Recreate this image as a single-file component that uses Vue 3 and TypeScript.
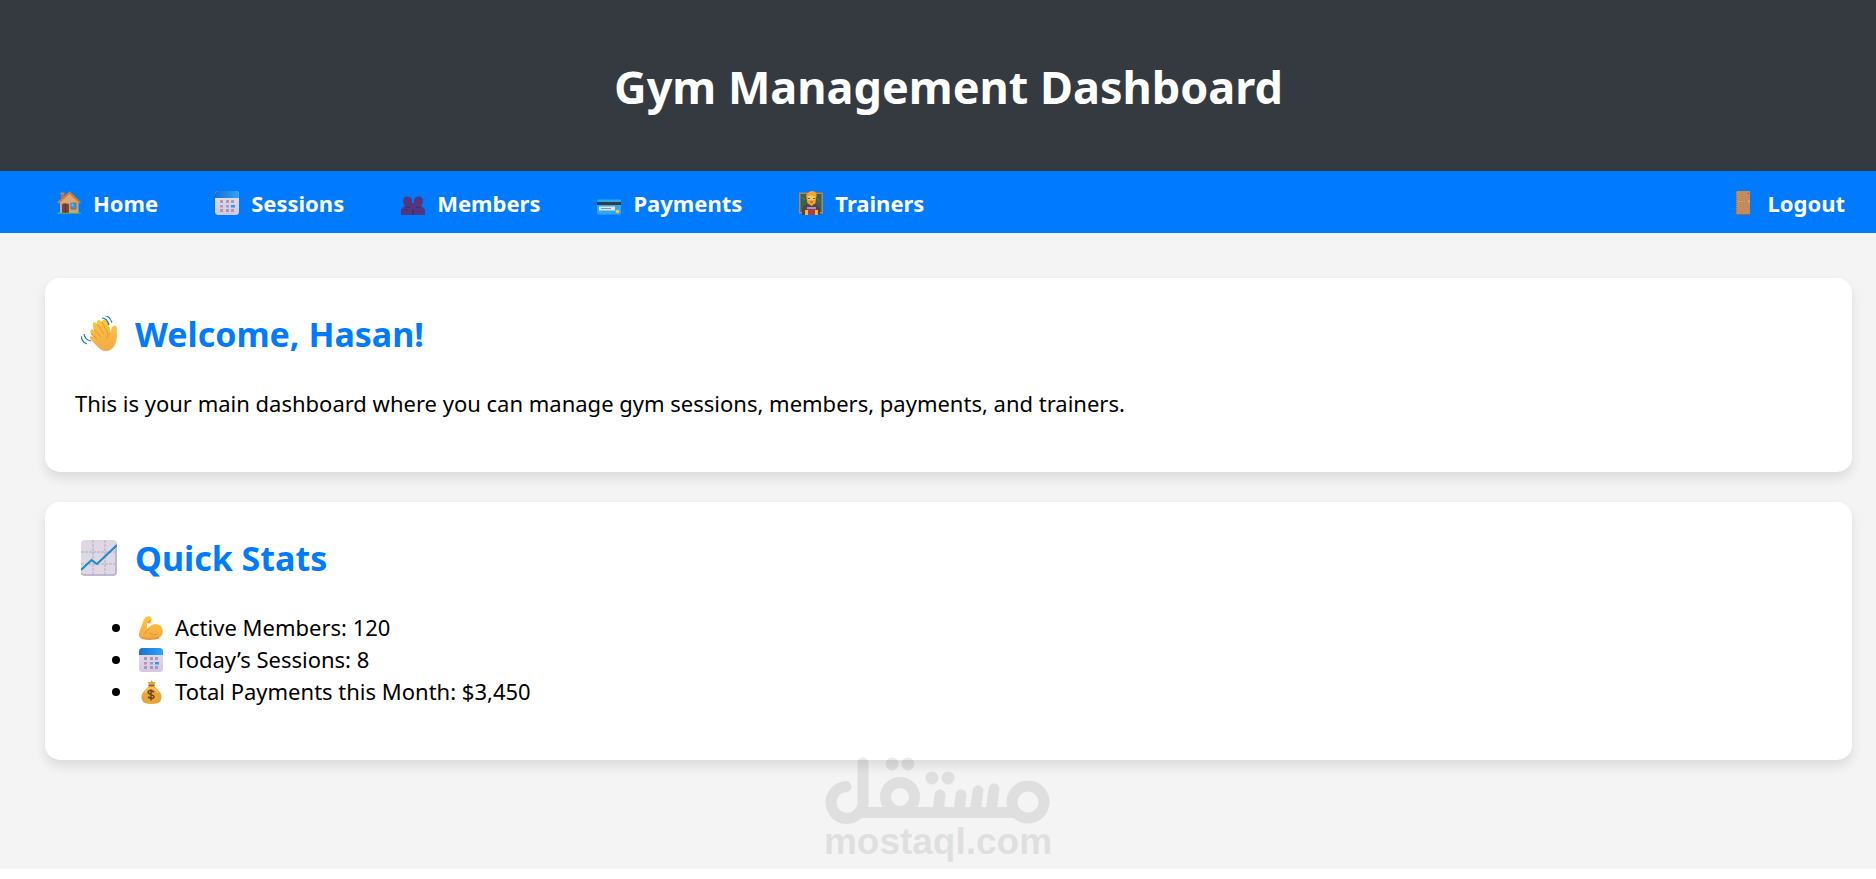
<script setup lang="ts">
interface NavItem {
  label: string
  icon: string
}

interface Stat {
  icon: string
  text: string
}

const navItems: NavItem[] = [
  { label: 'Home', icon: 'home' },
  { label: 'Sessions', icon: 'calendar' },
  { label: 'Members', icon: 'members' },
  { label: 'Payments', icon: 'card' },
  { label: 'Trainers', icon: 'trainer' },
]

const stats: Stat[] = [
  { icon: 'muscle', text: 'Active Members: 120' },
  { icon: 'calendar', text: 'Today’s Sessions: 8' },
  { icon: 'money', text: 'Total Payments this Month: $3,450' },
]
</script>

<template>
  <svg class="sprite" aria-hidden="true">
    <defs>
      <linearGradient id="skin" x1="0" y1="0" x2="0" y2="1">
        <stop offset="0" stop-color="#ffc83d" />
        <stop offset="1" stop-color="#f2a848" />
      </linearGradient>
      <linearGradient id="paper" x1="0" y1="0" x2="0" y2="1">
        <stop offset="0" stop-color="#e4dfe9" />
        <stop offset="1" stop-color="#d5c6e6" />
      </linearGradient>
      <linearGradient id="calTop" x1="0" y1="0" x2="1" y2="0">
        <stop offset="0" stop-color="#1670d4" />
        <stop offset="1" stop-color="#2fa4f8" />
      </linearGradient>
      <symbol id="home" viewBox="0 0 24 24">
        <path d="M4 2h3v7H4z" fill="#a9714b" />
        <path d="M3.500 1.500h4v2h-4z" fill="#c48a5c" />
        <path d="M3 11 12.500 2.500 21.500 11v12H3z" fill="#d9a878" />
        <path d="M3 13h18M3 16h18M3 19h18" stroke="#c99366" />
        <path d="M.8 12 12.500 1.600 23.200 12" fill="none" stroke="#d97b28" stroke-width="2" />
        <path d="M5 13.500q3-2.500 7 0V22H5z" fill="#79443b" />
        <path d="M8.500 13v9" stroke="#5f3029" />
        <path d="M14 12h5v6h-5z" fill="#209cf0" stroke="#8a6b6b" />
        <path d="M14.500 12.500h2v3h-2z" fill="#55bbf6" />
        <path d="M0 22q2-1.500 4-.3h16q2-1 4 .3v1H0z" fill="#3bae72" />
      </symbol>
      <symbol id="calendar" viewBox="0 0 24 24">
        <rect width="24" height="24" rx="3.500" fill="url(#paper)" />
        <path d="M0 7V3.500Q0 0 3.500 0h17Q24 0 24 3.500V7z" fill="url(#calTop)" />
        <path d="M5 9h3v3H5zm6 0h3v3h-3zm5 0h3v3h-3zM5 14h3v2.500H5zm6 0h3v2.500h-3zM5 18h3v3H5zm6 0h3v3h-3zm5 0h3v3h-3z" fill="#a59bb2" />
        <path d="M16 14h4v2.500h-4z" fill="#249cf5" />
      </symbol>
      <symbol id="members" viewBox="0 0 24 24">
        <path d="M0 24v-4q0-3 4-5Q2 13 2 10q0-4.500 4.500-4.500Q10 5.500 11 9v3h2V9q1-3.500 4.500-3.500Q22 5.500 22 10q0 3-2 5 4 2 4 5v4z" fill="#533580" />
        <path d="M12 18v6M5 18l1 2M5 15.500q2 1.500 4 .5M19 16q-2 1-4 0" fill="none" stroke="#402668" />
      </symbol>
      <symbol id="card" viewBox="0 0 24 24">
        <rect y="8.500" width="24" height="15" rx="1.500" fill="#32a9e6" />
        <path d="M0 11h24v3H0z" fill="#343b4b" />
        <path d="M2 15.500h16v4H2z" fill="#d9e6f3" />
        <path d="M4 17.500h10" stroke="#7f93b5" />
        <circle cx="20.500" cy="20.500" r="1.800" fill="#f8c548" />
      </symbol>
      <symbol id="trainer" viewBox="0 0 24 24">
        <path d="M0 1.500h24v21H0z" fill="#b88557" />
        <path d="M1.500 3h21v18h-21z" fill="#3c6150" />
        <path d="m3 6 3 3M18 7l3 4" stroke="#55816b" />
        <path d="M3 24v-6q1-4 6-5h6q5 1 6 5v6z" fill="#594047" />
        <path d="M7.500 7q-1-3 1-4.500Q10 0 13 0q3.500 0 4.500 3 .5 2-.5 4l-.5 5-4 3-4-3z" fill="#f6a52b" />
        <path d="M9 5.500q4-2 7 0V9H9z" fill="#f8c56a" />
        <path d="M9 7.500h2m3 0h2M11 11h3" stroke="#8b4c2c" />
        <path d="M8 16h9v3H8z" fill="#9c99bc" />
        <path d="M8 18h9v6H8z" fill="#a43f50" />
        <path d="M6 19h3v5H6zm10 0h3v5h-3z" fill="#f7b535" />
      </symbol>
      <symbol id="door" viewBox="0 0 24 24">
        <path d="M5 0h14v24H5z" fill="#c28a5d" />
        <path d="M5.500 0v24" stroke="#9c6747" stroke-dasharray="1 1" />
        <path d="M7 10.500h7" stroke="#dba05f" stroke-dasharray="2 1" />
        <path d="M5 23.500h14" stroke="#9b6543" />
        <path d="M17 9h1.500v2.500H17z" fill="#f8aa32" />
        <path d="M17 2h1v1h-1z" fill="#824b3b" />
      </symbol>
      <symbol id="wave" viewBox="0 0 36 36">
        <path d="M10 18c-2-4 1-6 3-3l-1-5c-1-4 2-5 4-2-1-5 3-5 5-2 1-4 5-3 6 1l3 9c0-5 2-7 5-6 2 1 0 4 1 8 0 10-4 17-11 17-5 0-7-3-11-7l-4-4c-2-3-1-5 2-3z" fill="url(#skin)" />
        <path d="m10 18 6 5M13 13l7 8M16 8l7 10M21 6l6 12M29 17q-4 2-3 6" fill="none" stroke="#dd963d" stroke-width="1" />
        <path d="M21 2q5 0 7 7M24-.500q5 1 7 7M3 18q1 6 7 7M0 20q1 6 6 8" fill="none" stroke="#1979b5" stroke-width="1.200" />
      </symbol>
      <symbol id="chart" viewBox="0 0 36 36">
        <rect width="36" height="36" rx="4" fill="#ded7e4" />
        <path d="M0 33q1 2 4 2h28q3 0 3-3V5" fill="none" stroke="#b9afc6" stroke-width="1.500" />
        <path d="M12 0v36M24 0v36M0 12h36M0 24h36" stroke="#b5acc2" stroke-dasharray="3 1" />
        <path d="m0 30 10.500-10 5.500 4L36 5" fill="none" stroke="#1c8bc8" stroke-width="2" />
      </symbol>
      <symbol id="muscle" viewBox="0 0 24 24">
        <path d="M5 3Q7-.500 11 .500q3 2 1 6-2 2-4 .500L8 13q7-8 14-3 3 4 1 9-3 5-9 4H3q-5-2-2-9z" fill="url(#skin)" />
        <path d="M10 13q-3 1-4 5m5-1q3 3 7 1M8 6q3 1 3-2" fill="none" stroke="#df923c" />
        <path d="M3 22q9 2 17-.5" fill="none" stroke="#e29a41" stroke-width="2" />
      </symbol>
      <symbol id="money" viewBox="0 0 24 24">
        <path d="m9 2 2.500 0 1-2 1.500 2h2.500L15 6l4 4q5 5 3 10-1 4-9.500 4T3 20q-2-5 3-10l4-4z" fill="#e9a43a" />
        <path d="M6 13q2-4 5-5h3q3 1 5 5" fill="none" stroke="#fbc24d" stroke-width="2" />
        <path d="M9.500 5.500h6" stroke="#985b37" stroke-width="1.500" />
        <path d="M15 12q-5-3-6 0c0 3 6 2 6 5q-1 3-6 0M12 9.500v11" fill="none" stroke="#704121" stroke-width="1.500" />
      </symbol>
    </defs>
  </svg>

  <div class="page">
    <header class="header">
      <h1>Gym Management Dashboard</h1>
    </header>

    <nav class="nav" aria-label="Main">
      <a v-for="item in navItems" :key="item.label" href="#">
        <svg class="icon" aria-hidden="true"><use :href="`#${item.icon}`" /></svg>
        <span>{{ item.label }}</span>
      </a>
      <a class="logout" href="#">
        <svg class="icon" aria-hidden="true"><use href="#door" /></svg>
        <span>Logout</span>
      </a>
    </nav>

    <main class="main">
      <section class="panel">
        <h2>
          <svg class="icon" aria-hidden="true"><use href="#wave" /></svg>
          <span>Welcome, Hasan!</span>
        </h2>
        <p>This is your main dashboard where you can manage gym sessions, members, payments, and trainers.</p>
      </section>

      <section class="panel">
        <h2>
          <svg class="icon" aria-hidden="true"><use href="#chart" /></svg>
          <span>Quick Stats</span>
        </h2>
        <ul>
          <li v-for="stat in stats" :key="stat.text">
            <svg class="icon" aria-hidden="true"><use :href="`#${stat.icon}`" /></svg>
            <span>{{ stat.text }}</span>
          </li>
        </ul>
      </section>
    </main>

    <div class="watermark">
      <svg viewBox="0 0 226 68" role="img" aria-label="مستقل">
        <g fill="none" stroke="#000" stroke-width="11" stroke-linecap="round">
          <path d="M21 29.500a16 16 0 1 0 17 16V6M38 55.500h150" />
          <circle cx="75" cy="40" r="14.500" />
          <circle cx="203" cy="45" r="16" />
          <path d="m115 38-2 17M136 38l-2 17M153 34l-3 21M169 32l-3 23" />
        </g>
        <g>
          <circle cx="67" cy="7" r="6.500" />
          <circle cx="83" cy="7" r="6.500" />
          <circle cx="107" cy="21" r="6.500" />
          <circle cx="123" cy="21" r="6.500" />
        </g>
      </svg>
      <span>mostaql.com</span>
    </div>
  </div>
</template>

<style>
body {
  margin: 0;
  background: #fff;
}
</style>

<style scoped>
.sprite {
  position: absolute;
  width: 0;
  height: 0;
}

.page {
  position: relative;
  padding-bottom: 34px;
  background: #f4f4f4;
  color: #000;
  font-family: "Segoe UI", "Noto Sans", sans-serif;
  font-size: 22px;
  line-height: 32px;
}

.header {
  padding: 55px 0 52px 21px;
  background: #343a40;
  color: #fff;
  text-align: center;
}

h1 {
  margin: 0;
  font-size: 45px;
  line-height: 64px;
}

.nav {
  display: flex;
  gap: 53px;
  padding: 16px 31px 14px 53px;
  background: #007bff;
}

.nav a {
  display: flex;
  align-items: center;
  color: #fff;
  font-weight: 700;
  text-decoration: none;
}

.nav .logout {
  margin-left: auto;
}

.icon {
  flex: none;
  width: 24px;
  height: 24px;
  margin: 0 12px 0 4px;
  overflow: visible;
}

.main {
  display: grid;
  gap: 30px;
  padding: 45px 24px 75px 45px;
}

.panel {
  padding: 32px 30px 53px;
  border-radius: 15px;
  background: #fff;
  box-shadow: 0 6px 12px rgba(0, 0, 0, 0.1);
}

h2 {
  display: flex;
  align-items: center;
  margin: 0 0 29px;
  color: #007bff;
  font-size: 34px;
  line-height: 48px;
}

h2 .icon {
  width: 36px;
  height: 36px;
  margin: 0 18px 0 6px;
}

p {
  margin: 0;
}

ul {
  margin: 0;
  padding-left: 60px;
}

li .icon {
  vertical-align: -4px;
}

.watermark {
  position: absolute;
  bottom: 11px;
  left: 50%;
  display: flex;
  flex-direction: column;
  align-items: center;
  width: 226px;
  margin-left: -113px;
  opacity: 0.08;
  font-family: "Liberation Sans", Arial, sans-serif;
  font-size: 37px;
  font-weight: 700;
  line-height: 33px;
  pointer-events: none;
}

.watermark svg {
  width: 226px;
  height: 68px;
}
</style>
